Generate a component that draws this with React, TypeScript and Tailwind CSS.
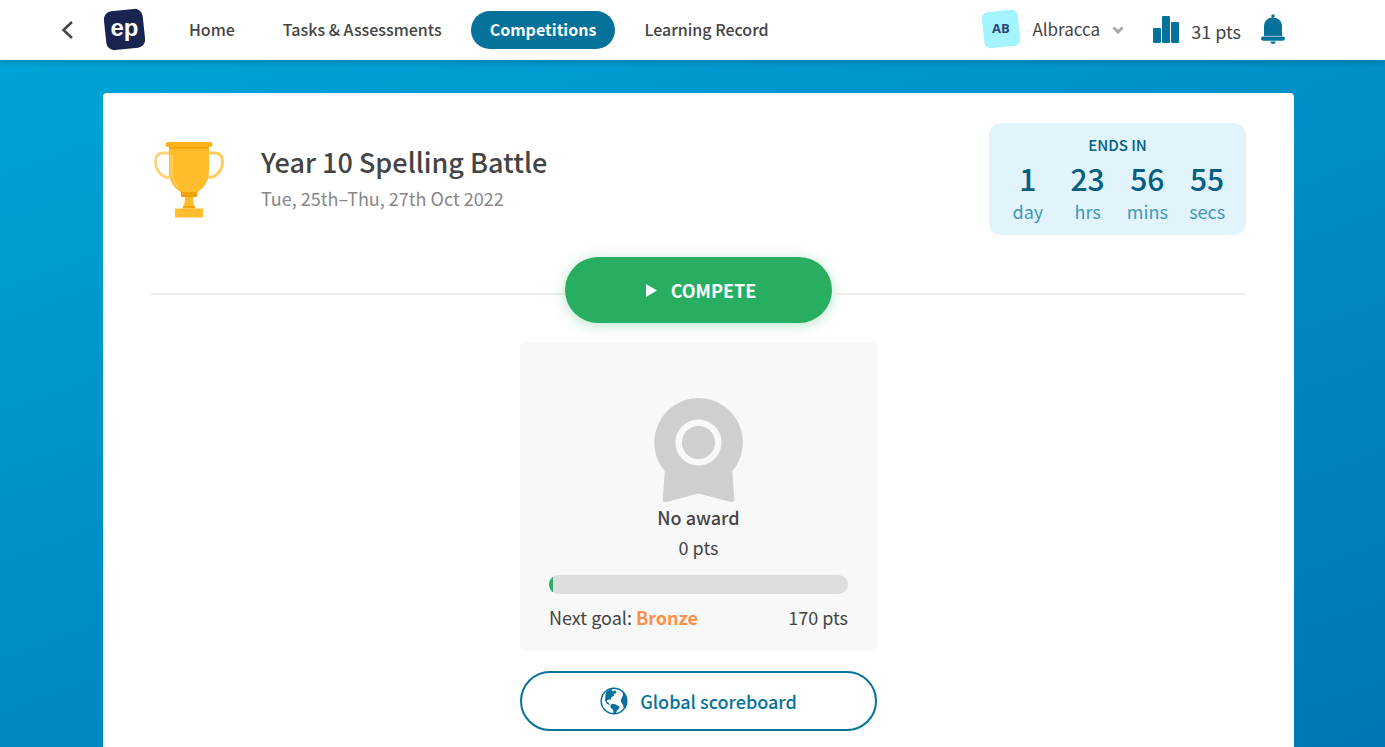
import React from 'react'

interface NavItem {
  label: string
  active?: boolean
}

interface TimeUnit {
  value: number
  label: string
}

const navItems: NavItem[] = [
  { label: 'Home' },
  { label: 'Tasks & Assessments' },
  { label: 'Competitions', active: true },
  { label: 'Learning Record' },
]

const timeLeft: TimeUnit[] = [
  { value: 1, label: 'day' },
  { value: 23, label: 'hrs' },
  { value: 56, label: 'mins' },
  { value: 55, label: 'secs' },
]

const TrophyIcon = () => (
  <svg className="h-[76px] w-[70px]" viewBox="0 0 70 76" fill="none" aria-hidden="true">
    <path d="M15 11H9C3.500 11 1.500 15 1.500 20c0 8 6 15.500 14 15.500" stroke="#ffd47a" strokeWidth="3" />
    <path d="M55 11h6c5.500 0 7.500 4 7.500 9 0 8-6 15.500-14 15.500" stroke="#ffcb5c" strokeWidth="3" />
    <path d="M15 5h40v24c0 11-6 19-14 22H29c-8-3-14-11-14-22V5z" fill="#ffbc2b" />
    <path d="M17.500 13v15c0 7 2 12 6 16" stroke="#ffcb5c" strokeWidth="2.500" />
    <rect x="15" y="4" width="40" height="2.500" fill="#f3a107" />
    <rect x="11.500" y="0" width="47" height="5" rx="2.500" fill="#ffb21a" />
    <rect x="27" y="50" width="16" height="5" fill="#f3a107" />
    <path d="M31 55h8c0 4 .5 7 2 10H29c1.500-3 2-6 2-10z" fill="#ffbc2b" />
    <rect x="29" y="64" width="12" height="2.500" fill="#f3a107" />
    <rect x="21" y="66.500" width="28" height="9" fill="#ffbc2b" />
  </svg>
)

const BellIcon = () => (
  <svg className="h-[31px] w-6" viewBox="0 0 24 31" fill="#04729b" aria-hidden="true">
    <circle cx="12" cy="2" r="1.700" />
    <path d="M3 22v-9.500C3 7 7 3.500 12 3.500s9 3.500 9 9V22H3z" />
    <rect x="0" y="22.500" width="24" height="4.200" rx="2.100" />
    <path d="M9.500 27.500h5a2.500 2.500 0 01-5 0z" />
  </svg>
)

const AwardIcon = () => (
  <svg className="h-[104px] w-[89px]" viewBox="0 0 89 104" aria-hidden="true">
    <path
      d="M44.500 0a44.500 44.500 0 0133.800 73.200l2 28c.1 2-1.300 3.200-3.300 2.700L44.500 95.500 12 103.900c-2 .5-3.300-.7-3.200-2.700l2-28A44.500 44.500 0 0144.500 0z"
      fill="#cfcfcf"
    />
    <circle cx="44.500" cy="44.500" r="19.800" fill="#cfcfcf" stroke="#f8f8f8" strokeWidth="6.500" />
  </svg>
)

const GlobeIcon = () => (
  <svg className="h-7 w-7" viewBox="0 0 28 28" aria-hidden="true">
    <circle cx="14" cy="14" r="12.800" fill="none" stroke="#04729b" strokeWidth="1.500" />
    <path
      d="M6 5.500C8 3.200 10.500 2 13.500 1.500l-2 1.500 1.500 1.500 2-1.200 1.500 1.200-.8 2-2 .2.300 1.800-3 2.200-.5 2.300-2-.6-1.700 1 .2 1.700 1.800.8.700 2-2.500-1L5 13.500 5.500 8z"
      fill="#04729b"
    />
    <path d="M10.500 17.500l3.500-.8 5.500 2.800c.3 2-1 3-2.200 3.700l-2 3.800-1.800.2-.3-4.200-2.700-2.500v-3z" fill="#04729b" />
    <path d="M22.500 4.500c6 5.500 5.800 13.500 1 18.200.5-2.700-.3-4.300-1.200-5.700-1.800-2-1.600-4.800-.3-6.500l1-2.500-.5-3.500z" fill="#04729b" />
  </svg>
)

const Header = () => (
  <header className="relative flex h-[60px] items-center bg-white pr-[100px] pl-[61px] shadow-[0_2px_6px_rgba(0,0,0,0.2)]">
    <button type="button" aria-label="Back" className="w-[42px]">
      <svg className="h-[18px] w-3" viewBox="0 0 12 18" fill="none" stroke="#444" strokeWidth="2.500">
        <path d="M11 1L2.500 9l8.500 8" />
      </svg>
    </button>
    <a href="#" aria-label="ep home" className="pb-0.5">
      <svg className="h-[43px] w-[43px]" viewBox="0 0 43 43" aria-hidden="true">
        <rect x="2" y="2" width="39" height="39" rx="8" fill="#192451" transform="rotate(-6 21.500 21.500)" />
        <text
          x="21.500"
          y="27.500"
          textAnchor="middle"
          fill="#fff"
          fontFamily="Liberation Sans, sans-serif"
          fontWeight="700"
          fontSize="24"
        >
          ep
        </text>
      </svg>
    </a>
    <nav className="ml-6 flex gap-[10px]">
      {navItems.map((item) => (
        <a
          key={item.label}
          href="#"
          aria-current={item.active ? 'page' : undefined}
          className={`h-[38px] rounded-full px-[19px] text-[16px] leading-9 whitespace-nowrap ${
            item.active ? 'bg-[#04729b] font-bold text-white' : 'font-medium'
          }`}
        >
          {item.label}
        </a>
      ))}
    </nav>
    <div className="ml-auto flex items-center pb-0.5">
      <button type="button" className="flex items-center">
        <span className="flex h-9 w-9 -rotate-6 items-center justify-center rounded-md bg-[#a4f4ff]">
          <span className="rotate-6 font-['Open_Sans',sans-serif] text-[13px] font-bold text-[#28487a]">AB</span>
        </span>
        <span className="ml-[13px] text-[17px] leading-6">Albracca</span>
        <svg className="mt-0.5 ml-3 h-2 w-3" viewBox="0 0 12 8" fill="none" stroke="#aaa" strokeWidth="3">
          <path d="M1.500 1.500L6 6l4.500-4.500" />
        </svg>
      </button>
      <svg className="ml-[29px] h-[27px] w-[26px]" viewBox="0 0 26 27" fill="#04729b" aria-hidden="true">
        <rect x="0" y="12" width="8" height="15" rx="1" />
        <rect x="9" y="0" width="8" height="27" rx="1" />
        <rect x="18" y="6" width="8" height="21" rx="1" />
      </svg>
      <span className="ml-3 pt-1 text-[18px] leading-6">31 pts</span>
      <button type="button" aria-label="Notifications" className="ml-5">
        <BellIcon />
      </button>
    </div>
  </header>
)

const Countdown = () => (
  <div className="ml-auto h-28 w-[257px] rounded-xl bg-[#e1f4fc] px-[9px] pt-3 text-center text-[#035f82]">
    <div className="text-[15px] leading-5 font-medium">ENDS IN</div>
    <div className="grid grid-cols-4">
      {timeLeft.map((unit) => (
        <div key={unit.label}>
          <div className="text-[30px] leading-[46px] font-medium">{unit.value}</div>
          <div className="text-[18px] leading-5 text-[#3f98b9]">{unit.label}</div>
        </div>
      ))}
    </div>
  </div>
)

const AwardPanel = () => (
  <section className="mt-[19px] rounded-md bg-[#f8f8f8] px-[29px] pt-14 pb-5">
    <div className="flex flex-col items-center">
      <AwardIcon />
      <h2 className="text-[18px] leading-[30px] font-medium">No award</h2>
      <p className="text-[18px] leading-[30px]">0 pts</p>
    </div>
    <div
      role="progressbar"
      aria-label="Progress to next goal"
      aria-valuemin={0}
      aria-valuemax={170}
      aria-valuenow={0}
      className="mt-[13px] h-[19px] overflow-hidden rounded-full bg-[#ddd]"
    >
      <div className="h-full w-1 bg-[#28ae60]" />
    </div>
    <div className="mt-[9px] flex justify-between text-[18px] leading-7">
      <span>
        Next goal: <strong className="font-bold text-[#fc9149]">Bronze</strong>
      </span>
      <span>170 pts</span>
    </div>
  </section>
)

export const App: React.FC = () => {
  return (
    <div className="flex min-h-screen flex-col bg-[linear-gradient(160deg,#00a6d9_0%,#0076b1_100%)] font-['Noto_Sans_CJK_SC','Noto_Sans',sans-serif] text-[#444]">
      <Header />
      <main className="mt-[33px] mr-[91px] ml-[103px] flex-1 rounded-t bg-white px-12 pt-[30px] pb-4">
        <div className="flex">
          <div className="pt-[19px] pl-[3px]">
            <TrophyIcon />
          </div>
          <div className="ml-[37px] pt-[21px]">
            <h1 className="text-[27px] leading-9 font-medium">Year 10 Spelling Battle</h1>
            <p className="mt-1 text-[18px] leading-7 text-[#888]">Tue, 25th–Thu, 27th Oct 2022</p>
          </div>
          <Countdown />
        </div>

        <div className="mt-[22px] flex items-center">
          <div className="mt-2 h-0.5 flex-1 bg-[#eee]" />
          <button
            type="button"
            className="flex h-[66px] w-[267px] items-center justify-center gap-[14px] rounded-full bg-[#28ae60] pl-[5px] text-[18px] font-bold text-white shadow-[0_2px_14px_rgba(40,174,96,0.35)]"
          >
            <svg className="h-[13px] w-[11px]" viewBox="0 0 11 13" fill="#fff" aria-hidden="true">
              <path d="M0 0l11 6.500L0 13z" />
            </svg>
            COMPETE
          </button>
          <div className="mt-2 h-0.5 flex-1 bg-[#eee]" />
        </div>

        <div className="mx-auto w-[357px]">
          <AwardPanel />
          <button
            type="button"
            className="mt-5 flex h-[60px] w-full items-center justify-center gap-3 rounded-full border-2 border-[#04729b] text-[18px] font-medium text-[#04729b]"
          >
            <GlobeIcon />
            Global scoreboard
          </button>
        </div>
      </main>
    </div>
  )
}

export default App
